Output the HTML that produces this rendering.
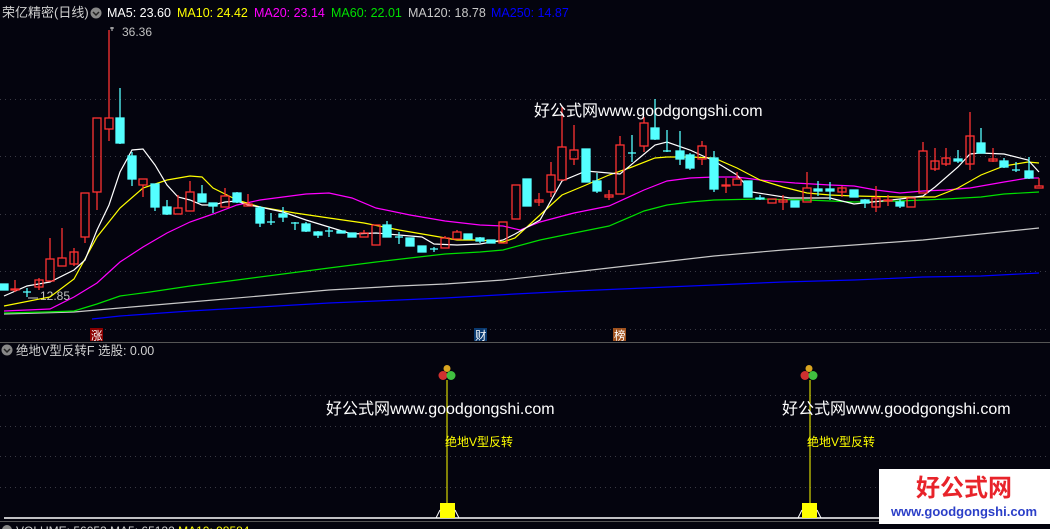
<!DOCTYPE html>
<html><head><meta charset="utf-8"><style>
html,body{margin:0;padding:0;background:#04040e;width:1050px;height:529px;overflow:hidden}
svg{display:block}
text{font-family:"Liberation Sans","Noto Sans CJK SC",sans-serif}
</style></head><body>
<svg width="1050" height="529" viewBox="0 0 1050 529" xmlns="http://www.w3.org/2000/svg">
<rect width="1050" height="529" fill="#04040e"/>
<g stroke="#3a3a44" stroke-width="1" stroke-dasharray="1,4">
<line x1="0" y1="99.5" x2="1050" y2="99.5"/>
<line x1="0" y1="156.5" x2="1050" y2="156.5"/>
<line x1="0" y1="214.5" x2="1050" y2="214.5"/>
<line x1="0" y1="271.5" x2="1050" y2="271.5"/>
<line x1="0" y1="329.5" x2="1050" y2="329.5"/>
<line x1="0" y1="395.5" x2="1050" y2="395.5"/>
<line x1="0" y1="426.5" x2="1050" y2="426.5"/>
<line x1="0" y1="456.5" x2="1050" y2="456.5"/>
<line x1="0" y1="487.5" x2="1050" y2="487.5"/>
</g>
<line x1="0" y1="342.5" x2="1050" y2="342.5" stroke="#555" />
<line x1="0" y1="521.5" x2="1050" y2="521.5" stroke="#555" />

<text x="2" y="17" font-size="13" fill="#d0d0d0">荣亿精密(日线)</text>
<circle cx="96" cy="13" r="5.5" fill="#888"/><path d="M93 12 l3 3 l3 -3" stroke="#222" stroke-width="1.5" fill="none"/>
<text x="107" y="17" font-size="12.5" fill="#ffffff">MA5: 23.60</text>
<text x="177" y="17" font-size="12.5" fill="#ffff00">MA10: 24.42</text>
<text x="254" y="17" font-size="12.5" fill="#ff00ff">MA20: 23.14</text>
<text x="331" y="17" font-size="12.5" fill="#00e000">MA60: 22.01</text>
<text x="408" y="17" font-size="12.5" fill="#c8c8c8">MA120: 18.78</text>
<text x="491" y="17" font-size="12.5" fill="#0000ff">MA250: 14.87</text>
<path d="M110 28 l4 0 M112 27 l0 4" stroke="#ccc"/>
<text x="122" y="36" font-size="12" fill="#c0c0c0">36.36</text>
<text x="40" y="300" font-size="12" fill="#c0c0c0">12.85</text>
<path d="M28 298 l10 0" stroke="#ccc"/>

<g fill="none" stroke-width="1.2">
<polyline stroke="#0000ff" points="92,319 120,316 190,311 260,307 329,303 399,300 445,298 515,294 574,291 644,288 714,285 783,282 854,280 923,277 981,276 1039,273"/>
<polyline stroke="#c8c8c8" points="4,314 74,312 120,308 190,302 260,296 329,290 399,286 445,284 503,280 574,272 644,264 714,256 783,250 854,245 923,240 981,234 1039,228"/>
<polyline stroke="#00e000" points="4,313 45,312 74,311 97,304 120,296 150,292 190,286 237,280 283,274 329,268 376,262 410,258 445,254 480,252 503,250 540,240 574,233 609,226 644,211 667,205 690,202 714,200 760,199 807,200 854,202 900,201 946,199 981,197 1004,194 1039,192"/>
<polyline stroke="#ff00ff" points="4,311 50,309 74,297 97,283 120,262 143,247 167,233 190,222 213,214 237,205 260,200 283,197 306,194 329,193 352,198 376,208 410,215 445,221 480,225 503,226 520,230 540,222 574,213 609,206 644,190 667,181 690,178 714,177 737,177 760,180 795,183 830,185 854,186 876,190 900,193 923,191 946,190 970,188 1004,182 1028,178 1039,178"/>
<polyline stroke="#ffff00" points="4,306 50,297 74,279 97,237 120,208 143,188 167,180 190,176 202,177 213,188 237,200 260,207 295,213 329,218 364,223 399,230 434,236 457,240 480,240 503,242 515,238 540,215 562,195 586,185 609,175 632,167 655,158 667,157 690,157 714,158 737,168 760,180 783,187 807,193 830,195 854,196 900,197 935,197 958,188 981,175 1004,166 1028,162 1039,163"/>
<polyline stroke="#ffffff" points="4,296 27,286 50,282 74,270 85,260 97,230 109,205 120,172 132,150 143,149 155,165 167,185 178,197 190,200 202,205 213,205 225,202 237,201 248,205 260,207 283,212 306,220 329,227 352,234 376,233 399,235 422,237 434,244 457,245 480,244 503,240 515,234 540,220 562,181 586,171 620,174 655,145 667,142 690,150 714,161 737,175 752,192 790,198 830,198 854,204 900,199 923,196 935,187 958,167 970,154 980,153 1004,154 1028,160 1039,172"/>
</g>

<g stroke-width="1.3">
<g stroke="#ff3232" fill="none">
<line x1="15" y1="280" x2="15" y2="292"/><rect x="11" y="289" width="8" height="1"/>
<line x1="39" y1="278" x2="39" y2="290"/><rect x="35" y="280" width="8" height="7"/>
<line x1="50" y1="238" x2="50" y2="259"/><rect x="46" y="259" width="8" height="22"/>
<line x1="62" y1="228" x2="62" y2="258"/><rect x="58" y="258" width="8" height="8"/>
<line x1="74" y1="248" x2="74" y2="266"/><rect x="70" y="252" width="8" height="12"/>
<line x1="85" y1="237" x2="85" y2="243"/><rect x="81" y="193" width="8" height="44"/>
<line x1="97" y1="192" x2="97" y2="210"/><rect x="93" y="118" width="8" height="74"/>
<line x1="109" y1="30" x2="109" y2="118"/><line x1="109" y1="129" x2="109" y2="141"/><rect x="105" y="118" width="8" height="11"/>
<line x1="143" y1="185" x2="143" y2="197"/><rect x="139" y="179" width="8" height="6"/>
<line x1="178" y1="195" x2="178" y2="208"/><rect x="174" y="208" width="8" height="6"/>
<line x1="190" y1="181" x2="190" y2="192"/><rect x="186" y="192" width="8" height="19"/>
<line x1="225" y1="188" x2="225" y2="196"/><rect x="221" y="196" width="8" height="11"/>
<line x1="248" y1="194" x2="248" y2="204"/><rect x="244" y="204" width="8" height="2"/>
<line x1="364" y1="230" x2="364" y2="233"/><rect x="360" y="233" width="8" height="4"/>
<rect x="372" y="225" width="8" height="20"/>
<line x1="445" y1="236" x2="445" y2="238"/><rect x="441" y="238" width="8" height="10"/>
<line x1="457" y1="230" x2="457" y2="232"/><rect x="453" y="232" width="8" height="7"/>
<rect x="499" y="222" width="8" height="21"/>
<rect x="512" y="185" width="8" height="34"/>
<line x1="539" y1="193" x2="539" y2="206"/><rect x="535" y="200" width="8" height="2"/>
<line x1="551" y1="162" x2="551" y2="175"/><line x1="551" y1="192" x2="551" y2="197"/><rect x="547" y="175" width="8" height="17"/>
<line x1="562" y1="107" x2="562" y2="147"/><rect x="558" y="147" width="8" height="33"/>
<line x1="574" y1="125" x2="574" y2="150"/><line x1="574" y1="159" x2="574" y2="165"/><rect x="570" y="150" width="8" height="9"/>
<line x1="609" y1="190" x2="609" y2="200"/><rect x="605" y="195" width="8" height="2"/>
<line x1="620" y1="136" x2="620" y2="145"/><rect x="616" y="145" width="8" height="49"/>
<line x1="644" y1="117" x2="644" y2="123"/><line x1="644" y1="146" x2="644" y2="152"/><rect x="640" y="123" width="8" height="23"/>
<line x1="702" y1="141" x2="702" y2="146"/><line x1="702" y1="159" x2="702" y2="165"/><rect x="698" y="146" width="8" height="13"/>
<line x1="726" y1="178" x2="726" y2="193"/><rect x="722" y="185" width="8" height="1"/>
<line x1="737" y1="172" x2="737" y2="179"/><rect x="733" y="179" width="8" height="6"/>
<rect x="768" y="199" width="8" height="4"/>
<line x1="783" y1="195" x2="783" y2="210"/><rect x="779" y="200" width="8" height="2"/>
<line x1="807" y1="172" x2="807" y2="188"/><rect x="803" y="188" width="8" height="14"/>
<line x1="842" y1="186" x2="842" y2="197"/><rect x="838" y="188" width="8" height="4"/>
<line x1="876" y1="186" x2="876" y2="212"/><rect x="872" y="198" width="8" height="9"/>
<line x1="888" y1="195" x2="888" y2="206"/><rect x="884" y="200" width="8" height="1"/>
<rect x="907" y="198" width="8" height="9"/>
<line x1="923" y1="142" x2="923" y2="151"/><rect x="919" y="151" width="8" height="42"/>
<line x1="935" y1="148" x2="935" y2="171"/><rect x="931" y="161" width="8" height="8"/>
<line x1="946" y1="148" x2="946" y2="166"/><rect x="942" y="158" width="8" height="6"/>
<line x1="970" y1="112" x2="970" y2="170"/><rect x="966" y="136" width="8" height="28"/>
<line x1="993" y1="148" x2="993" y2="162"/><rect x="989" y="159" width="8" height="2"/>
<line x1="1039" y1="178" x2="1039" y2="186"/><rect x="1035" y="186" width="8" height="2"/>
</g>
<g stroke="#54ffff" fill="#54ffff">
<rect x="0" y="284" width="8" height="6"/>
<line x1="27" y1="288" x2="27" y2="297"/><line x1="23" y1="292" x2="31" y2="292"/>
<line x1="120" y1="88" x2="120" y2="144"/><rect x="116" y="118" width="8" height="25"/>
<line x1="132" y1="152" x2="132" y2="186"/><rect x="128" y="156" width="8" height="23"/>
<line x1="155" y1="184" x2="155" y2="211"/><rect x="151" y="184" width="8" height="23"/>
<line x1="167" y1="200" x2="167" y2="215"/><rect x="163" y="207" width="8" height="7"/>
<line x1="202" y1="185" x2="202" y2="202"/><rect x="198" y="194" width="8" height="8"/>
<line x1="213" y1="203" x2="213" y2="213"/><rect x="209" y="203" width="8" height="3"/>
<line x1="237" y1="192" x2="237" y2="203"/><rect x="233" y="193" width="8" height="9"/>
<line x1="260" y1="206" x2="260" y2="227"/><rect x="256" y="208" width="8" height="15"/>
<line x1="271" y1="213" x2="271" y2="225"/><line x1="267" y1="222" x2="275" y2="222"/>
<line x1="283" y1="207" x2="283" y2="222"/><rect x="279" y="214" width="8" height="3"/>
<line x1="295" y1="222" x2="295" y2="230"/><line x1="291" y1="223" x2="299" y2="223"/>
<line x1="306" y1="222" x2="306" y2="232"/><rect x="302" y="224" width="8" height="7"/>
<line x1="318" y1="231" x2="318" y2="238"/><rect x="314" y="232" width="8" height="3"/>
<line x1="329" y1="227" x2="329" y2="237"/><line x1="325" y1="231" x2="333" y2="231"/>
<rect x="337" y="231" width="8" height="2"/>
<rect x="348" y="233" width="8" height="4"/>
<line x1="387" y1="221" x2="387" y2="237"/><rect x="383" y="225" width="8" height="12"/>
<line x1="399" y1="232" x2="399" y2="244"/><line x1="395" y1="237" x2="403" y2="237"/>
<rect x="406" y="238" width="8" height="8"/>
<rect x="418" y="246" width="8" height="6"/>
<line x1="434" y1="247" x2="434" y2="252"/><line x1="430" y1="249" x2="438" y2="249"/>
<rect x="464" y="234" width="8" height="5"/>
<line x1="480" y1="237" x2="480" y2="243"/><rect x="476" y="238" width="8" height="3"/>
<rect x="487" y="240" width="8" height="3"/>
<rect x="523" y="179" width="8" height="27"/>
<rect x="582" y="149" width="8" height="33"/>
<line x1="597" y1="173" x2="597" y2="193"/><rect x="593" y="181" width="8" height="10"/>
<line x1="632" y1="135" x2="632" y2="162"/><line x1="628" y1="153" x2="636" y2="153"/>
<line x1="655" y1="99" x2="655" y2="140"/><rect x="651" y="128" width="8" height="11"/>
<line x1="667" y1="130" x2="667" y2="152"/><line x1="663" y1="151" x2="671" y2="151"/>
<line x1="680" y1="131" x2="680" y2="165"/><rect x="676" y="151" width="8" height="8"/>
<line x1="690" y1="153" x2="690" y2="170"/><rect x="686" y="155" width="8" height="13"/>
<line x1="714" y1="151" x2="714" y2="192"/><rect x="710" y="158" width="8" height="31"/>
<rect x="744" y="181" width="8" height="16"/>
<line x1="760" y1="195" x2="760" y2="200"/><rect x="756" y="198" width="8" height="1"/>
<rect x="791" y="201" width="8" height="6"/>
<line x1="818" y1="181" x2="818" y2="196"/><rect x="814" y="189" width="8" height="2"/>
<line x1="830" y1="182" x2="830" y2="200"/><rect x="826" y="189" width="8" height="2"/>
<rect x="850" y="190" width="8" height="7"/>
<line x1="865" y1="199" x2="865" y2="208"/><rect x="861" y="200" width="8" height="3"/>
<line x1="900" y1="199" x2="900" y2="208"/><rect x="896" y="202" width="8" height="4"/>
<line x1="958" y1="150" x2="958" y2="163"/><rect x="954" y="159" width="8" height="2"/>
<line x1="981" y1="128" x2="981" y2="153"/><rect x="977" y="143" width="8" height="10"/>
<line x1="1004" y1="158" x2="1004" y2="168"/><rect x="1000" y="161" width="8" height="6"/>
<line x1="1016" y1="162" x2="1016" y2="172"/><line x1="1012" y1="170" x2="1020" y2="170"/>
<line x1="1029" y1="157" x2="1029" y2="179"/><rect x="1025" y="171" width="8" height="7"/>
</g>
</g>

<text x="534" y="116" font-size="16" fill="#ffffff">好公式网www.goodgongshi.com</text>

<rect x="90" y="328" width="13" height="13" fill="#8b0000"/><text x="91" y="339.5" font-size="11.5" fill="#fff">涨</text>
<rect x="474" y="328" width="13" height="13" fill="#0a3a70"/><text x="475" y="339.5" font-size="11.5" fill="#fff">财</text>
<rect x="613" y="328" width="13" height="13" fill="#a0521e"/><text x="614" y="339.5" font-size="11.5" fill="#fff">榜</text>

<circle cx="7" cy="350" r="5.5" fill="#888"/><path d="M4 349 l3 3 l3 -3" stroke="#222" stroke-width="1.5" fill="none"/>
<text x="16" y="355" font-size="12.5" fill="#d0d0d0">绝地V型反转F 选股: 0.00</text>

<line x1="4" y1="518" x2="1050" y2="518" stroke="#fff" stroke-width="1.5"/>
<g>
<line x1="447" y1="380" x2="447" y2="504" stroke="#ffff00"/>
<rect x="440" y="503" width="15" height="15" fill="#ffff00"/>
<path d="M436 518 l4 -8 M459 518 l-4 -8" stroke="#fff"/>
<circle cx="447" cy="368.5" r="3.5" fill="#d9a520"/><circle cx="443" cy="375.5" r="4.5" fill="#d03030"/><circle cx="451" cy="375.5" r="4.5" fill="#40c040"/>
<text x="445" y="446" font-size="12" fill="#ffff00">绝地V型反转</text>
<line x1="810" y1="380" x2="810" y2="504" stroke="#ffff00"/>
<rect x="802" y="503" width="15" height="15" fill="#ffff00"/>
<path d="M798 518 l4 -8 M821 518 l-4 -8" stroke="#fff"/>
<circle cx="809" cy="368.5" r="3.5" fill="#d9a520"/><circle cx="805" cy="375.5" r="4.5" fill="#d03030"/><circle cx="813" cy="375.5" r="4.5" fill="#40c040"/>
<text x="807" y="446" font-size="12" fill="#ffff00">绝地V型反转</text>
</g>
<text x="326" y="414" font-size="16" fill="#ffffff">好公式网www.goodgongshi.com</text>
<text x="782" y="414" font-size="16" fill="#ffffff">好公式网www.goodgongshi.com</text>

<text x="16" y="535" font-size="12" fill="#d0d0d0">VOLUME: 56052  MA5: 65122 <tspan fill="#ffff00">MA10: 98584</tspan></text>
<circle cx="7" cy="530" r="5" fill="#888"/>

<rect x="879" y="469" width="171" height="55" fill="#ffffff"/>
<text x="964" y="496" font-size="24" font-weight="bold" fill="#e8232a" text-anchor="middle">好公式网</text>
<text x="964" y="516" font-size="13" font-weight="bold" fill="#2b3fc8" text-anchor="middle">www.goodgongshi.com</text>
</svg>
</body></html>
